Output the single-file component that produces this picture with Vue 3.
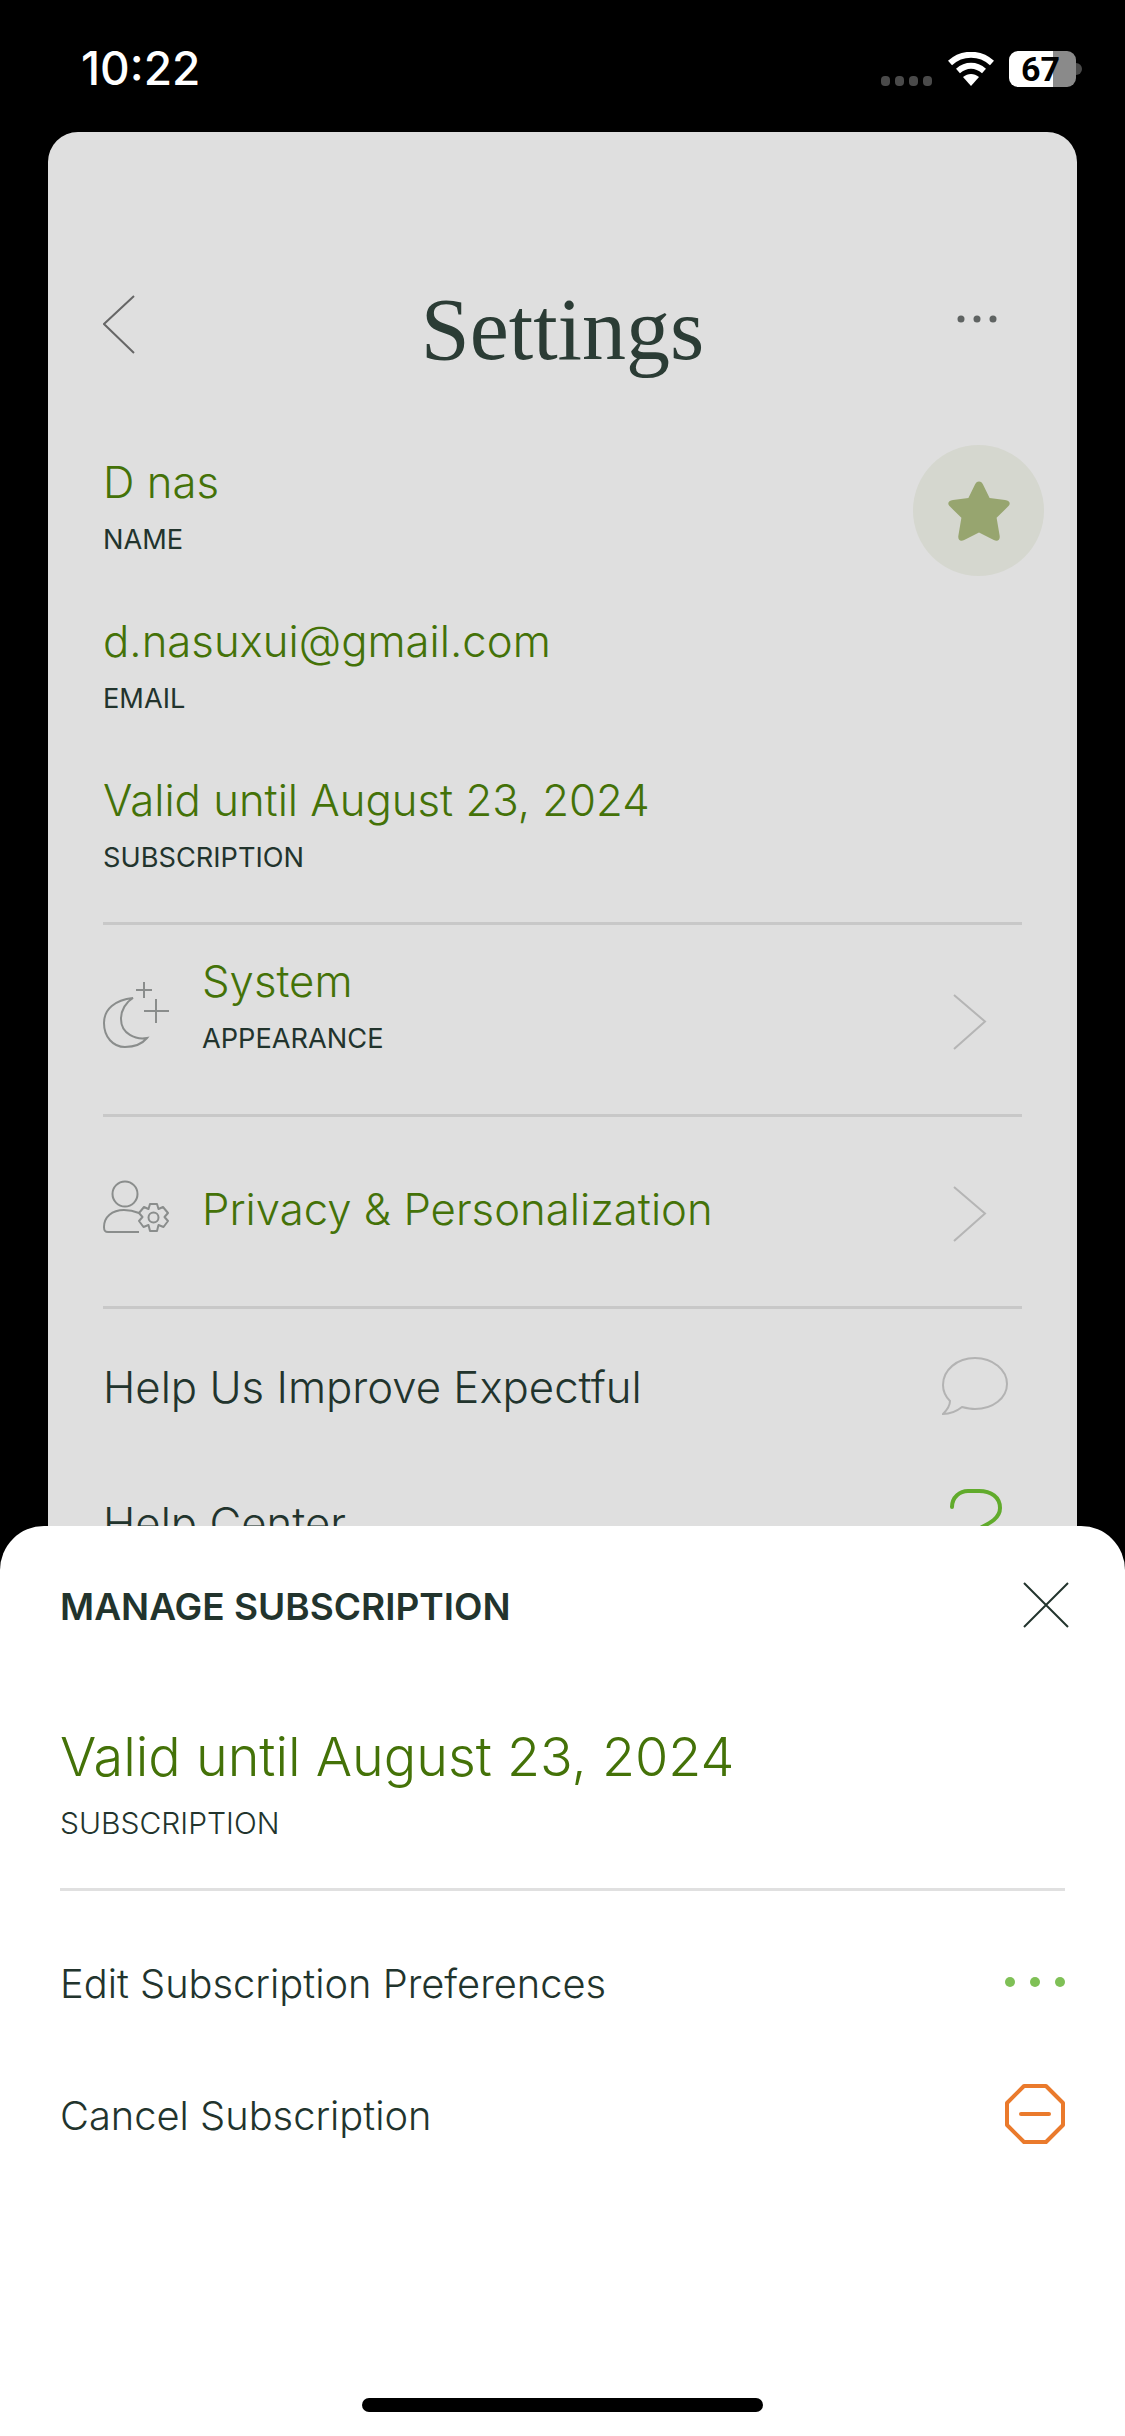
<script setup>
const fields = [
  { value: 'D nas', label: 'NAME' },
  { value: 'd.nasuxui@gmail.com', label: 'EMAIL' },
  { value: 'Valid until August 23, 2024', label: 'SUBSCRIPTION' },
]
</script>

<template>
  <div class="screen">
    <header class="status">
      <span class="time">10:22</span>
      <div class="status-icons">
        <svg class="signal" width="52" height="10" viewBox="0 0 52 10">
          <rect x="0" y="0" width="9" height="10" rx="4" />
          <rect x="14" y="0" width="9" height="10" rx="4" />
          <rect x="28" y="0" width="9" height="10" rx="4" />
          <rect x="42" y="0" width="9" height="10" rx="4" />
        </svg>
        <svg class="wifi" width="46" height="34" viewBox="0 0 46 34">
          <path d="M2 11 C14 0 32 0 44 11" fill="none" stroke="#fff" stroke-width="6" />
          <path d="M10 19 C18 12 28 12 36 19" fill="none" stroke="#fff" stroke-width="6" />
          <path d="M23 34 L15 25 C20 21 26 21 31 25 Z" fill="#fff" />
        </svg>
        <div class="battery">
          <div class="battery-body">
            <span class="battery-level">67</span>
          </div>
          <span class="battery-nub"></span>
        </div>
      </div>
    </header>

    <main class="card">
      <div class="nav">
        <svg width="34" height="60" viewBox="0 0 34 60">
          <path d="M31 1 L1 29 L31 58" fill="none" stroke="#666" stroke-width="2" />
        </svg>
        <h1 class="title">Settings</h1>
        <svg class="more" width="40" height="8" viewBox="0 0 40 8">
          <circle cx="4" cy="4" r="3.5" fill="#5f6362" />
          <circle cx="20" cy="4" r="3.5" fill="#5f6362" />
          <circle cx="36" cy="4" r="3.5" fill="#5f6362" />
        </svg>
      </div>

      <div class="fields">
        <div v-for="f in fields" :key="f.label" class="field">
          <div class="value">{{ f.value }}</div>
          <div class="label">{{ f.label }}</div>
        </div>
        <div class="badge">
          <svg width="64" height="62" viewBox="0 0 64 62">
            <path d="M32 1.5 C34 1.5 35 2.6 36 4.6 L42.6 18 L58 20 C63 20.8 64 23.6 61 26.6 L49.6 37.8 L52.6 55.5 C53.4 60 50.6 62 46.8 60 L32 52.6 L17.2 60 C13.4 62 10.6 60 11.4 55.5 L14.4 37.8 L3 26.6 C0 23.6 1 20.8 6 20 L21.4 18 L28 4.6 C29 2.6 30 1.5 32 1.5 Z" fill="#97a56f" />
          </svg>
        </div>
      </div>

      <div class="row">
        <div class="row-icon">
          <svg width="68" height="68" viewBox="0 0 68 68">
            <path d="M30 16 C12 18 1 27 1 41 C1 55 10 65 22 65 C31 65 39 62 44 56 C33 58 18 52 18 37 C18 28 23 20 30 16 Z" fill="none" stroke="#8a8d8c" stroke-width="2" />
            <path d="M33 8 H49 M41 0 V16" fill="none" stroke="#8a8d8c" stroke-width="2" />
            <path d="M41 29 H66 M53 17 V41" fill="none" stroke="#8a8d8c" stroke-width="2" />
          </svg>
        </div>
        <div class="row-text raised">
          <div class="value">System</div>
          <div class="label">APPEARANCE</div>
        </div>
        <div class="row-end">
          <svg width="80" height="56" viewBox="0 0 80 56">
            <path d="M12 1 L43 27.5 L12 55" fill="none" stroke="#b5b5b5" stroke-width="2" />
          </svg>
        </div>
      </div>

      <div class="row">
        <div class="row-icon">
          <svg width="68" height="56" viewBox="0 0 68 56">
            <circle cx="22" cy="14" r="12.5" fill="none" stroke="#8a8d8c" stroke-width="2" />
            <path d="M36 33 C31 31 26 30 21 30 C9 30 1 37 1 47 C1 51 2 52 5 52 H36" fill="none" stroke="#8a8d8c" stroke-width="2" />
            <path d="M47 24 H54 L55.500 29 L60 27 L65 33 L61.500 37 L65 41 L60.500 47 L55.500 45 L54 51 H47 L45.500 45 L40.500 47 L36 41 L39.500 37 L36 33 L41 27 L45.500 29 Z" fill="#dfdfdf" stroke="#8a8d8c" stroke-width="2" stroke-linejoin="round" />
            <circle cx="50.500" cy="37.500" r="5" fill="none" stroke="#8a8d8c" stroke-width="2" />
          </svg>
        </div>
        <div class="row-text">
          <div class="value">Privacy &amp; Personalization</div>
        </div>
        <div class="row-end">
          <svg width="80" height="56" viewBox="0 0 80 56">
            <path d="M12 1 L43 27.5 L12 55" fill="none" stroke="#b5b5b5" stroke-width="2" />
          </svg>
        </div>
      </div>

      <div class="link-row first">
        <span class="link">Help Us Improve Expectful</span>
        <svg width="80" height="64" viewBox="0 0 80 64">
          <path d="M8 45 C3 40 1 35 1 29 C1 14 15 2 33 2 C51 2 65 14 65 28 C65 42 51 53 33 53 C28 53 24 52 20 51 C15 55 8 58 1 58 C5 54 8 50 8 45 Z" fill="none" stroke="#b3b3b3" stroke-width="2" />
        </svg>
      </div>
      <div class="link-row">
        <span class="link">Help Center</span>
        <svg width="80" height="70" viewBox="0 0 80 70">
          <path d="M10 18 C10 8 18 2 26 2 H37 C49 2 58 8 58 19 C58 29 48 34 40 38 C34 41 33 45 33 50" fill="none" stroke="#61ab2c" stroke-width="4" stroke-linecap="round" />
        </svg>
      </div>
    </main>

    <section class="sheet">
      <div class="sheet-head">
        <h2 class="sheet-title">MANAGE SUBSCRIPTION</h2>
        <svg class="close" width="46" height="46" viewBox="0 0 46 46">
          <path d="M1 1 L45 45 M45 1 L1 45" fill="none" stroke="#22342d" stroke-width="2" />
        </svg>
      </div>
      <div class="sheet-value">Valid until August 23, 2024</div>
      <div class="sheet-label">SUBSCRIPTION</div>
      <div class="sheet-divider"></div>
      <div class="sheet-row">
        <span class="sheet-link">Edit Subscription Preferences</span>
        <svg width="60" height="10" viewBox="0 0 60 10">
          <circle cx="5" cy="5" r="5" fill="#7fc056" />
          <circle cx="30" cy="5" r="5" fill="#7fc056" />
          <circle cx="55" cy="5" r="5" fill="#7fc056" />
        </svg>
      </div>
      <div class="sheet-row second">
        <span class="sheet-link">Cancel Subscription</span>
        <svg width="60" height="60" viewBox="0 0 60 60">
          <path d="M19 2 H41 L58 19 V41 L41 58 H19 L2 41 V19 Z" fill="none" stroke="#ea7a2c" stroke-width="4" stroke-linejoin="round" />
          <path d="M16 30 H44" fill="none" stroke="#ea7a2c" stroke-width="4" stroke-linecap="round" />
        </svg>
      </div>
    </section>

    <div class="home-indicator"></div>
  </div>
</template>

<style scoped>
.screen {
  position: relative;
  width: 1125px;
  height: 2436px;
  overflow: hidden;
  background: #000;
  font-family: Inter, "Liberation Sans", sans-serif;
  color: #22342d;
}
.status {
  height: 132px;
  box-sizing: border-box;
  padding: 0 43px 0 81px;
  display: flex;
  justify-content: space-between;
  align-items: flex-start;
}
.time {
  margin-top: 42px;
  font-size: 46px;
  line-height: 52px;
  font-weight: 500;
  color: #fff;
}
.status-icons {
  margin-top: 51px;
  display: flex;
  align-items: flex-start;
}
.signal { margin-top: 25px; fill: #4a4a4a; }
.wifi { margin: 1px 2px 0 15px; }
.battery { margin-left: 13px; display: flex; align-items: center; }
.battery-body {
  width: 67px;
  height: 36px;
  box-sizing: border-box;
  padding-right: 4px;
  border-radius: 9px;
  background: linear-gradient(90deg, #fff 0 66%, #8a8a8a 66% 100%);
  text-align: center;
}
.battery-level {
  display: block;
  font-size: 34px;
  line-height: 36px;
  font-weight: 700;
  color: #000;
  font-family: Roboto, sans-serif;
}
.battery-nub {
  width: 6px;
  height: 12px;
  border-radius: 0 6px 6px 0;
  background: #4a4a4a;
}
.card {
  height: 1500px;
  margin: 0 48px;
  box-sizing: border-box;
  padding: 163px 55px 0;
  background: #dfdfdf;
  border-radius: 30px 30px 0 0;
}
.nav {
  height: 100px;
  display: grid;
  grid-template-columns: 1fr auto 1fr;
  align-items: start;
}
.title {
  margin: -15px 0 0;
  font-family: "Liberation Serif", serif;
  font-size: 88px;
  line-height: 100px;
  font-weight: 400;
  color: #2b3c35;
}
.more { margin: 20px 25px 0 0; justify-self: end; }
.fields {
  position: relative;
  margin-top: 60px;
  height: 467px;
}
.field { height: 159px; }
.value {
  font-size: 43.7px;
  line-height: 56px;
  font-weight: 300;
  color: #447208;
}
.label {
  margin-top: 11px;
  font-size: 27.2px;
  line-height: 36px;
  color: #22342d;
}
.badge {
  position: absolute;
  right: -22px;
  top: -10px;
  width: 131px;
  height: 131px;
  border-radius: 50%;
  background: #d5d7cf;
  display: flex;
  align-items: center;
  justify-content: center;
}
.row {
  height: 192px;
  box-sizing: border-box;
  border-top: 3px solid #c8c8c8;
  padding-bottom: 4px;
  display: flex;
  align-items: center;
}
.row-icon { width: 99px; flex: none; display: flex; margin-bottom: 3px; }
.row-text { flex: 1; }
.row-text.raised { margin-bottom: 24px; }
.row-end { width: 80px; flex: none; display: flex; margin-top: 8px; }
.link-row {
  height: 160px;
  box-sizing: border-box;
  border-top: 3px solid #c8c8c8;
  display: flex;
  align-items: center;
  justify-content: space-between;
}
.link-row + .link-row { border-top: 0; height: 116px; }
.link {
  font-size: 43.7px;
  line-height: 56px;
  font-weight: 300;
  color: #22342d;
}
.sheet {
  position: absolute;
  left: 0;
  right: 0;
  bottom: 0;
  top: 1526px;
  box-sizing: border-box;
  padding: 59px 60px 0 60px;
  background: #fff;
  border-radius: 44px 44px 0 0;
}
.sheet-head {
  display: flex;
  justify-content: space-between;
  align-items: flex-start;
}
.close { margin: -3px -4px 0 0; }
.sheet-title {
  margin: 0;
  font-size: 37px;
  line-height: 44px;
  font-weight: 600;
  color: #22342d;
}
.sheet-value {
  margin-top: 96px;
  font-size: 53.9px;
  line-height: 64px;
  font-weight: 300;
  color: #447208;
}
.sheet-label {
  margin-top: 14px;
  font-size: 30px;
  line-height: 40px;
  font-weight: 350;
  color: #22342d;
}
.sheet-divider { margin-top: 45px; height: 3px; background: #e0e0e0; }
.sheet-row {
  margin-top: 63px;
  height: 60px;
  display: flex;
  justify-content: space-between;
  align-items: center;
}
.sheet-row.second { margin-top: 72px; }
.sheet-row svg { margin-bottom: 4px; }
.sheet-link {
  font-size: 39.8px;
  line-height: 50px;
  font-weight: 300;
  color: #22342d;
}
.home-indicator {
  position: absolute;
  left: 362px;
  bottom: 24px;
  width: 401px;
  height: 14px;
  border-radius: 7px;
  background: #000;
}
</style>
